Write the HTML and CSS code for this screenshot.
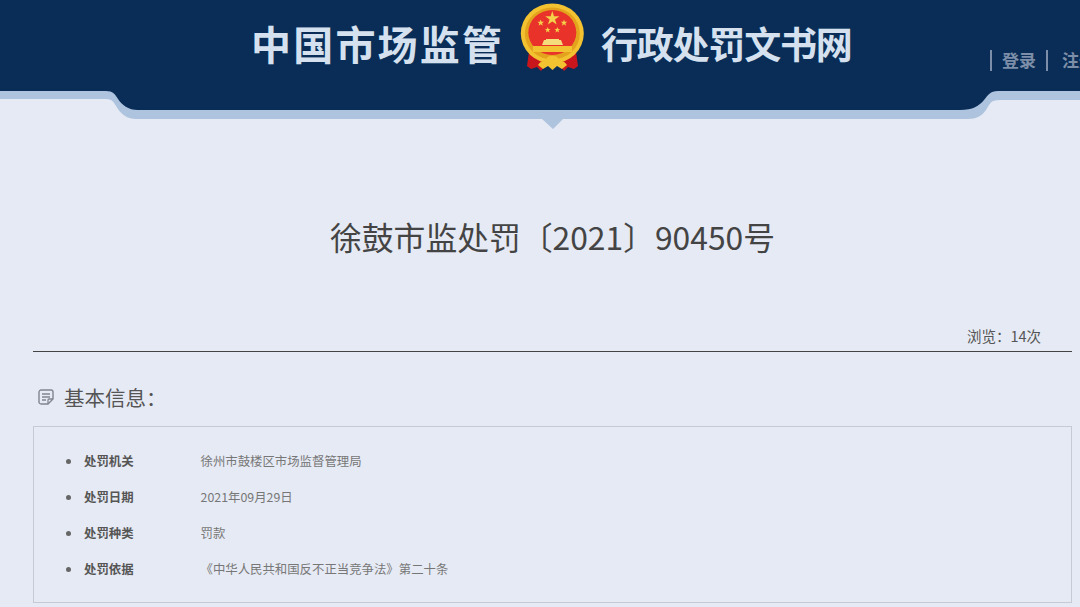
FILE: index.html
```html
<!DOCTYPE html>
<html lang="zh">
<head>
<meta charset="UTF-8" />
<meta name="viewport" content="width=device-width, initial-scale=1" />
<title>徐鼓市监处罚〔2021〕90450号</title>
<link rel="stylesheet" href="styles.css">
</head>
<body>

<header class="site-header">
  <svg class="header-art" viewBox="0 0 1080 130" width="1080" height="130" aria-hidden="true">
    <path fill="#adc3de" d="M0 91H1080V100H1000C990 100 990 104 986 110C982 116 976 119 968 119H563L553 129L542 119H136C128 119 122 115 118 109C114 103 113 99 106 99H0Z"/>
    <path fill="#0a2d57" d="M0 0H1080V91H998C990 91 988 95 984 100C979 106 973 110 960 110H138C128 110 122 105 118 99C115 94 113 91 106 91H0Z"/>
  </svg>
  <div class="brand">
    <span class="brand-left">中国市场监管</span>
    <svg class="emblem" viewBox="10 0 66 74" width="66" height="74" aria-hidden="true">
      <path fill="#c9161d" d="M19 52L17 66L21 69L27 67L31 71L38 62H47L54 71L58 67L64 69L68 66L66 52Z"/>
      <ellipse cx="42.300" cy="33.500" rx="31.500" ry="30" fill="#f3c230"/>
      <ellipse cx="42.300" cy="33.500" rx="27.500" ry="26" fill="#e3a31d"/>
      <ellipse cx="42.300" cy="32.500" rx="24" ry="22.500" fill="#e8322a"/>
      <path fill="#f5d04a" d="M42.300 11L44 16.200H49.400L45 19.400L46.700 24.500L42.300 21.400L37.900 24.500L39.600 19.400L35.200 16.200H40.600Z"/>
      <path fill="#f5d04a" d="M30.700 19.500L31.600 21.800H34L32.100 23.300L32.800 25.700L30.700 24.300L28.600 25.700L29.300 23.300L27.400 21.800H29.800Z"/>
      <path fill="#f5d04a" d="M54 19.500L54.900 21.800H57.300L55.400 23.300L56.100 25.700L54 24.300L51.900 25.700L52.600 23.300L50.700 21.800H53.100Z"/>
      <path fill="#f5d04a" d="M37.700 27L38.500 29H40.600L38.900 30.300L39.500 32.400L37.700 31.200L35.900 32.400L36.500 30.300L34.800 29H36.900Z"/>
      <path fill="#f5d04a" d="M47.300 27L48.100 29H50.200L48.500 30.300L49.100 32.400L47.300 31.200L45.500 32.400L46.100 30.300L44.400 29H46.500Z"/>
      <path fill="#f6dd7c" d="M34 40H36V39H49V40H51L53 45H32Z"/>
      <path fill="#f3c230" d="M23 46H62V52H23Z"/>
      <path fill="#f3c230" d="M28 65C31 60 35 62 37 58C39 55 46 55 48 58C50 62 54 60 57 65L52 69L47 66L42.500 70L38 66L33 69Z"/>
    </svg>
    <span class="brand-right">行政处罚文书网</span>
  </div>
  <nav class="user-links">
    <a class="user-link">登录</a>
    <a class="user-link">注册</a>
  </nav>
</header>

<main class="container">
  <h1 class="doc-title">徐鼓市监处罚〔2021〕90450号</h1>
  <div class="views">浏览：14次</div>

  <h2 class="section-title">
    <svg class="section-icon" viewBox="0 0 16 16" width="16" height="16" aria-hidden="true">
      <path fill="none" stroke="#808590" stroke-width="1.400" stroke-linejoin="round" d="M3 1H13C14 1 15 2 15 3V10L10 15H3C2 15 1 14 1 13V3C1 2 2 1 3 1Z"/>
      <path fill="none" stroke="#808590" stroke-width="1.300" d="M4 5H12M4 8H12M4 11H8M15 10H11C10.400 10 10 10.400 10 11V15"/>
    </svg>
    基本信息：
  </h2>

  <ul class="info-box">
    <li class="info-row"><span class="info-label">处罚机关</span><span class="info-value">徐州市鼓楼区市场监督管理局</span></li>
    <li class="info-row"><span class="info-label">处罚日期</span><span class="info-value">2021年09月29日</span></li>
    <li class="info-row"><span class="info-label">处罚种类</span><span class="info-value">罚款</span></li>
    <li class="info-row"><span class="info-label">处罚依据</span><span class="info-value">《中华人民共和国反不正当竞争法》第二十条</span></li>
  </ul>
</main>

</body>
</html>
```

FILE: styles.css
```css
html, body {
  overflow: hidden;
}
body {
  margin: 0;
  background: #e6eaf4;
  font-family: "Noto Sans CJK SC", "Noto Sans", sans-serif;
  color: #444;
}
.site-header {
  position: relative;
  height: 130px;
}
.header-art {
  position: absolute;
  top: 0;
  left: 0;
}
.brand {
  position: relative;
  display: flex;
  align-items: flex-start;
  padding-left: 251px;
  color: #d5e1ef;
  font-weight: 700;
}
.brand-left {
  width: 269px;
  font-size: 40px;
  letter-spacing: 2.200px;
  line-height: 86px;
  white-space: nowrap;
}
.brand-right {
  margin-left: 15px;
  font-size: 37px;
  letter-spacing: -1.200px;
  line-height: 86px;
  white-space: nowrap;
}
.user-links {
  position: absolute;
  top: 50px;
  left: 990px;
  display: flex;
  white-space: nowrap;
}
.user-link {
  border-left: 2px solid #7c8ea8;
  padding: 0 0 1px 10px;
  width: 44px;
  color: #7c8ea8;
  font-size: 17px;
  font-weight: 700;
  line-height: 20px;
}
.user-link + .user-link {
  padding-left: 14px;
}
.container {
  margin: 0 8px 0 33px;
}
.doc-title {
  margin: 80px 0 0;
  text-align: center;
  font-size: 31.800px;
  font-weight: 400;
  line-height: 52px;
  color: #444;
}
.views {
  margin-top: 64px;
  padding: 0 31px 5px 0;
  border-bottom: 1px solid #444;
  text-align: right;
  font-size: 14.500px;
  line-height: 20px;
  color: #555;
}
.section-title {
  display: flex;
  align-items: center;
  gap: 10px;
  margin: 28px 0 12px 5px;
  font-size: 20.500px;
  font-weight: 400;
  line-height: 34px;
  color: #555;
}
.section-icon {
  flex: none;
}
.info-box {
  margin: 0;
  padding: 16px 0 15px 32px;
  border: 1px solid #c5cad4;
  list-style: none;
}
.info-row {
  display: flex;
  align-items: center;
  height: 36px;
  font-size: 12.400px;
}
.info-row::before {
  content: "";
  width: 5px;
  height: 5px;
  margin-right: 13px;
  border-radius: 50%;
  background: #666;
}
.info-label {
  width: 116.500px;
  font-weight: 700;
  color: #555;
}
.info-value {
  color: #777;
}
```
